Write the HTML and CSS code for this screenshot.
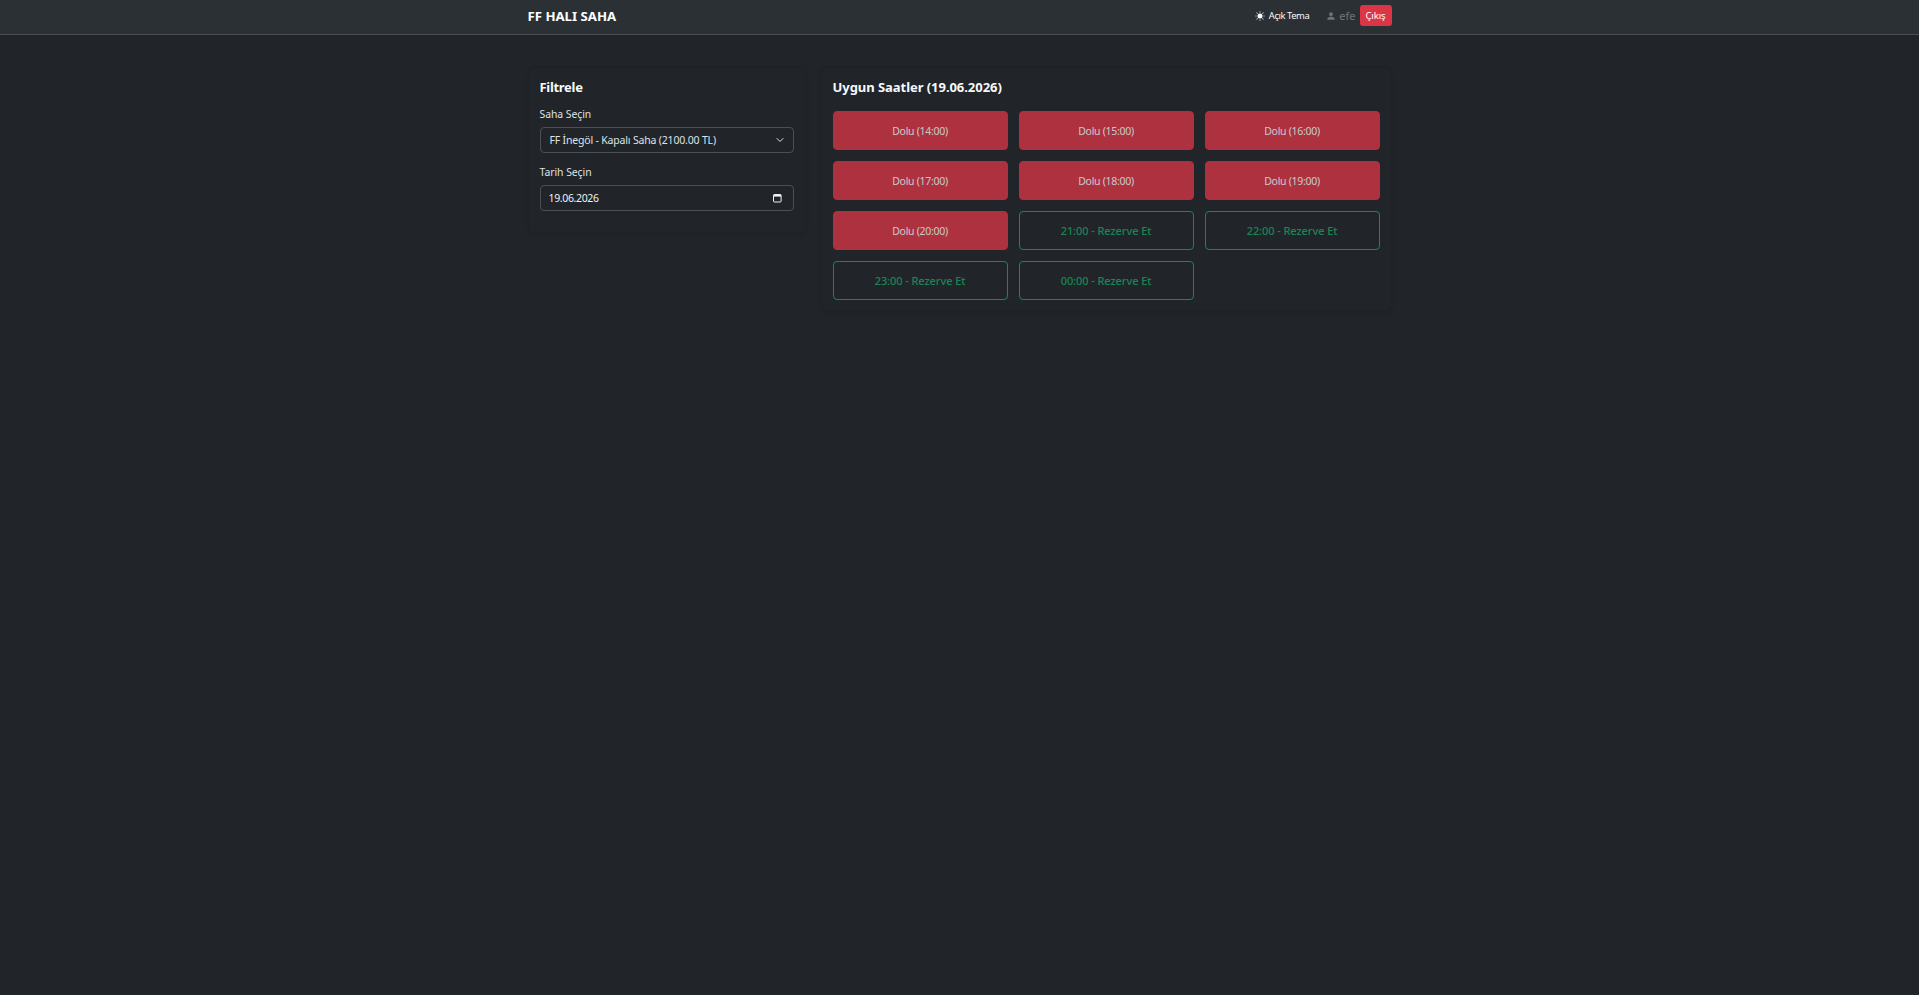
FILE: index.html
```html
<!DOCTYPE html>
<html lang="tr">
<head>
<meta charset="utf-8">
<title>FF Halı Saha</title>
<link rel="stylesheet" href="styles.css">
</head>
<body>
<header class="topbar">
  <div class="topbar-inner">
    <a class="brand">FF HALI SAHA</a>
    <div class="topbar-actions">
      <span class="theme-toggle">
        <svg class="icon-sun" viewBox="0 0 16 16" width="10" height="10" fill="currentColor"><path d="M8 12a4 4 0 1 0 0-8 4 4 0 0 0 0 8M8 0a.5.5 0 0 1 .5.5v2a.5.5 0 0 1-1 0v-2A.5.5 0 0 1 8 0m0 13a.5.5 0 0 1 .5.5v2a.5.5 0 0 1-1 0v-2A.5.5 0 0 1 8 13m8-5a.5.5 0 0 1-.5.5h-2a.5.5 0 0 1 0-1h2a.5.5 0 0 1 .5.5M3 8a.5.5 0 0 1-.5.5h-2a.5.5 0 0 1 0-1h2A.5.5 0 0 1 3 8m10.657-5.657a.5.5 0 0 1 0 .707l-1.414 1.415a.5.5 0 1 1-.707-.708l1.414-1.414a.5.5 0 0 1 .707 0m-9.193 9.193a.5.5 0 0 1 0 .707L3.05 13.657a.5.5 0 0 1-.707-.707l1.414-1.414a.5.5 0 0 1 .707 0m9.193 2.121a.5.5 0 0 1-.707 0l-1.414-1.414a.5.5 0 0 1 .707-.707l1.414 1.414a.5.5 0 0 1 0 .707M4.464 4.465a.5.5 0 0 1-.707 0L2.343 3.05a.5.5 0 1 1 .707-.707l1.414 1.414a.5.5 0 0 1 0 .708"/></svg>
        Açık Tema
      </span>
      <span class="user">
        <svg viewBox="0 0 16 16" width="10" height="10" fill="currentColor"><path d="M3 14s-1 0-1-1 1-4 6-4 6 3 6 4-1 1-1 1zm5-6a3 3 0 1 0 0-6 3 3 0 0 0 0 6"/></svg>
        efe
      </span>
      <a class="logout">Çıkış</a>
    </div>
  </div>
</header>
<main class="layout">
  <section class="card filter-card">
    <h2 class="card-title">Filtrele</h2>
    <div class="field">
      <label class="field-label">Saha Seçin</label>
      <div class="control control-select">
        <span>FF İnegöl - Kapalı Saha (2100.00 TL)</span>
        <svg viewBox="0 0 16 16" width="8" height="8" fill="none" stroke="#dee2e6" stroke-width="2" stroke-linecap="round" stroke-linejoin="round"><path d="m2 5 6 6 6-6"/></svg>
      </div>
    </div>
    <div class="field">
      <label class="field-label">Tarih Seçin</label>
      <div class="control control-date">
        <span>19.06.2026</span>
        <svg viewBox="0 0 9 10" width="9" height="10" fill="none" stroke="#f1f1f1"><rect x=".5" y="1.5" width="7.6" height="7.5" rx="1" stroke-width="1"/><path d="M.5 2.6h7.6" stroke-width="2"/></svg>
      </div>
    </div>
  </section>
  <section class="card slots-card">
    <h2 class="card-title">Uygun Saatler (19.06.2026)</h2>
    <div class="slots">
      <button class="slot slot-busy" disabled>Dolu (14:00)</button>
      <button class="slot slot-busy" disabled>Dolu (15:00)</button>
      <button class="slot slot-busy" disabled>Dolu (16:00)</button>
      <button class="slot slot-busy" disabled>Dolu (17:00)</button>
      <button class="slot slot-busy" disabled>Dolu (18:00)</button>
      <button class="slot slot-busy" disabled>Dolu (19:00)</button>
      <button class="slot slot-busy" disabled>Dolu (20:00)</button>
      <button class="slot slot-free">21:00 - Rezerve Et</button>
      <button class="slot slot-free">22:00 - Rezerve Et</button>
      <button class="slot slot-free">23:00 - Rezerve Et</button>
      <button class="slot slot-free">00:00 - Rezerve Et</button>
    </div>
  </section>
</main>
</body>
</html>
```
FILE: styles.css
```css
* { box-sizing: border-box; }
html, body { height: 100%; }
body {
  margin: 0;
  background: #212529;
  color: #dee2e6;
  font-family: "Noto Sans", "Open Sans", sans-serif;
  font-size: 11px;
}
.topbar {
  height: 35px;
  background: #2b3035;
  border-bottom: 1px solid #495057;
}
.topbar-inner {
  width: 864px;
  margin: 0 auto;
  height: 34px;
  padding-bottom: 3px;
  display: flex;
  align-items: center;
  justify-content: space-between;
}
.brand {
  color: #fff;
  font-weight: 700;
  font-size: 13.2px;
}
.topbar-actions { display: flex; align-items: center; }
.theme-toggle {
  color: #f8f9fa;
  font-size: 9.4px;
  letter-spacing: -0.42px;
  display: flex;
  align-items: center;
  gap: 4px;
  margin-right: 17px;
}
.user {
  color: #6c757d;
  font-size: 11px;
  display: flex;
  align-items: center;
  gap: 3px;
  margin-right: 4px;
}
.logout {
  background: #dc3545;
  color: #fff;
  font-size: 9.6px;
  letter-spacing: -0.1px;
  height: 21px;
  width: 32px;
  border-radius: 3px;
  display: flex;
  align-items: center;
  justify-content: center;
}
.layout {
  width: 864px;
  margin: 32px auto 0;
  display: grid;
  grid-template-columns: 278px 571px;
  justify-content: space-between;
  align-items: start;
}
.card {
  background: #212529;
  border: 1px solid #1e2125;
  border-radius: 5px;
  padding: 10px 11px;
  box-shadow: 0 2px 4px rgba(0, 0, 0, .075);
}
.card-title {
  margin: 0 0 10px;
  font-size: 13px;
  line-height: 18px;
  font-weight: 700;
  color: #f8f9fa;
}
.filter-card .card-title { letter-spacing: -0.3px; }
.slots-card .card-title { margin-bottom: 15px; letter-spacing: -0.05px; }
.field { margin-bottom: 11px; }
.field-label {
  display: block;
  line-height: 16px;
  margin-bottom: 5px;
  font-size: 10.4px;
  letter-spacing: -0.04px;
}
.control {
  height: 26px;
  border: 1px solid #495057;
  border-radius: 4px;
  display: flex;
  align-items: center;
  justify-content: space-between;
  color: #dee2e6;
  font-size: 10.5px;
}
.control-select { padding: 0 9px; letter-spacing: -0.18px; }
.control-date { padding: 0 11px 0 8px; letter-spacing: -0.35px; color: #f1f1f1; }
.slots {
  display: grid;
  grid-template-columns: repeat(3, 1fr);
  gap: 11px;
}
.slot {
  height: 39px;
  border-radius: 4px;
  font: inherit;
  font-size: 11px;
}
.slot-busy {
  background: #dc3545;
  border: 1px solid #dc3545;
  color: #fff;
  font-size: 10.5px;
  letter-spacing: -0.3px;
  opacity: .75;
}
.slot-free {
  background: transparent;
  border: 1px solid #198754;
  color: #198754;
  font-weight: 500;
  letter-spacing: -0.08px;
}
```
